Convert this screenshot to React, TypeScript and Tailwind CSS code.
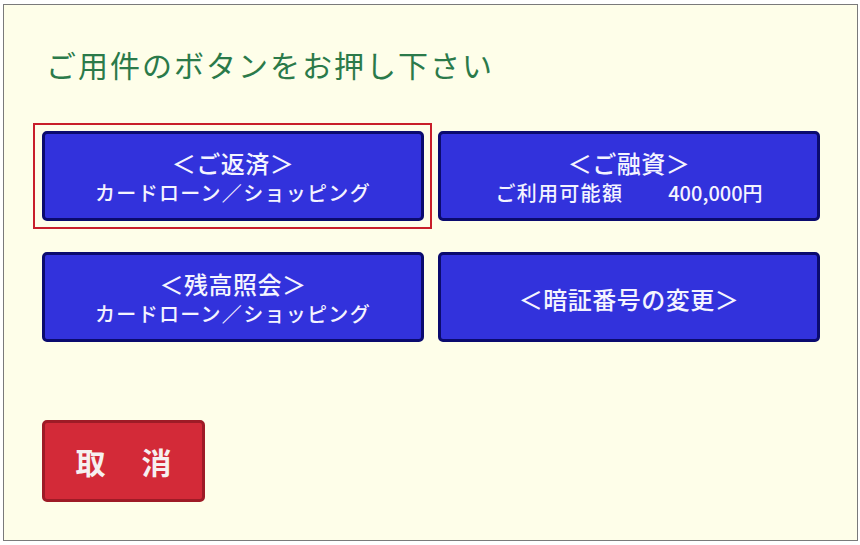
import React from "react";

const font = { fontFamily: '"Noto Sans CJK JP", "Noto Sans", sans-serif' };

function MenuButton({
  line1,
  line2,
  selected,
}: {
  line1: string;
  line2?: React.ReactNode;
  selected?: boolean;
}) {
  return (
    <div className="relative">
      {selected ? (
        <span className="pointer-events-none absolute -left-[9px] -right-[8px] -top-[8px] -bottom-[8px] border-2 border-[#c81e2a]" />
      ) : null}
      <button className="h-[90px] w-[382px] rounded-[5px] border-[3px] border-[#0b0b6e] bg-[#3232dc] text-[#f4f4ff] flex flex-col items-center justify-center pt-[4px] font-medium">
        <span className="text-[24px] leading-[30px] tracking-[0.5px]">{line1}</span>
        {line2 ? (
          <span className="text-[20px] leading-[30px] tracking-[1.3px]">{line2}</span>
        ) : null}
      </button>
    </div>
  );
}

export default function App() {
  return (
    <div className="w-[860px] h-[545px] bg-white pt-[4px] pl-[3px]" style={font}>
      <div className="w-[855px] h-[537px] border border-[#7a7a7a] bg-[#fefee9] pl-[38px] pt-[41px]">
        <div className="ml-[4px] text-[30px] leading-[36px] tracking-[2px] text-[#2b7a4a]">
          ご用件のボタンをお押し下さい
        </div>
        <div className="mt-[49px] grid grid-cols-[382px_382px] gap-x-[14px] gap-y-[31px]">
          <MenuButton line1="＜ご返済＞" line2="カードローン／ショッピング" selected />
          <MenuButton
            line1="＜ご融資＞"
            line2={
              <span className="flex items-baseline">
                <span>ご利用可能額</span>
                <span className="ml-[45px] tracking-[0px]">400,000円</span>
              </span>
            }
          />
          <MenuButton line1="＜残高照会＞" line2="カードローン／ショッピング" />
          <MenuButton line1="＜暗証番号の変更＞" />
        </div>
        <button className="mt-[78px] w-[163px] h-[82px] rounded-[5px] border-[3px] border-[#9e1b26] bg-[#d32a38] text-[#f6f0f0] text-[30px] font-bold tracking-[3px] pl-[3px] flex items-center justify-center">
          取　消
        </button>
      </div>
    </div>
  );
}
